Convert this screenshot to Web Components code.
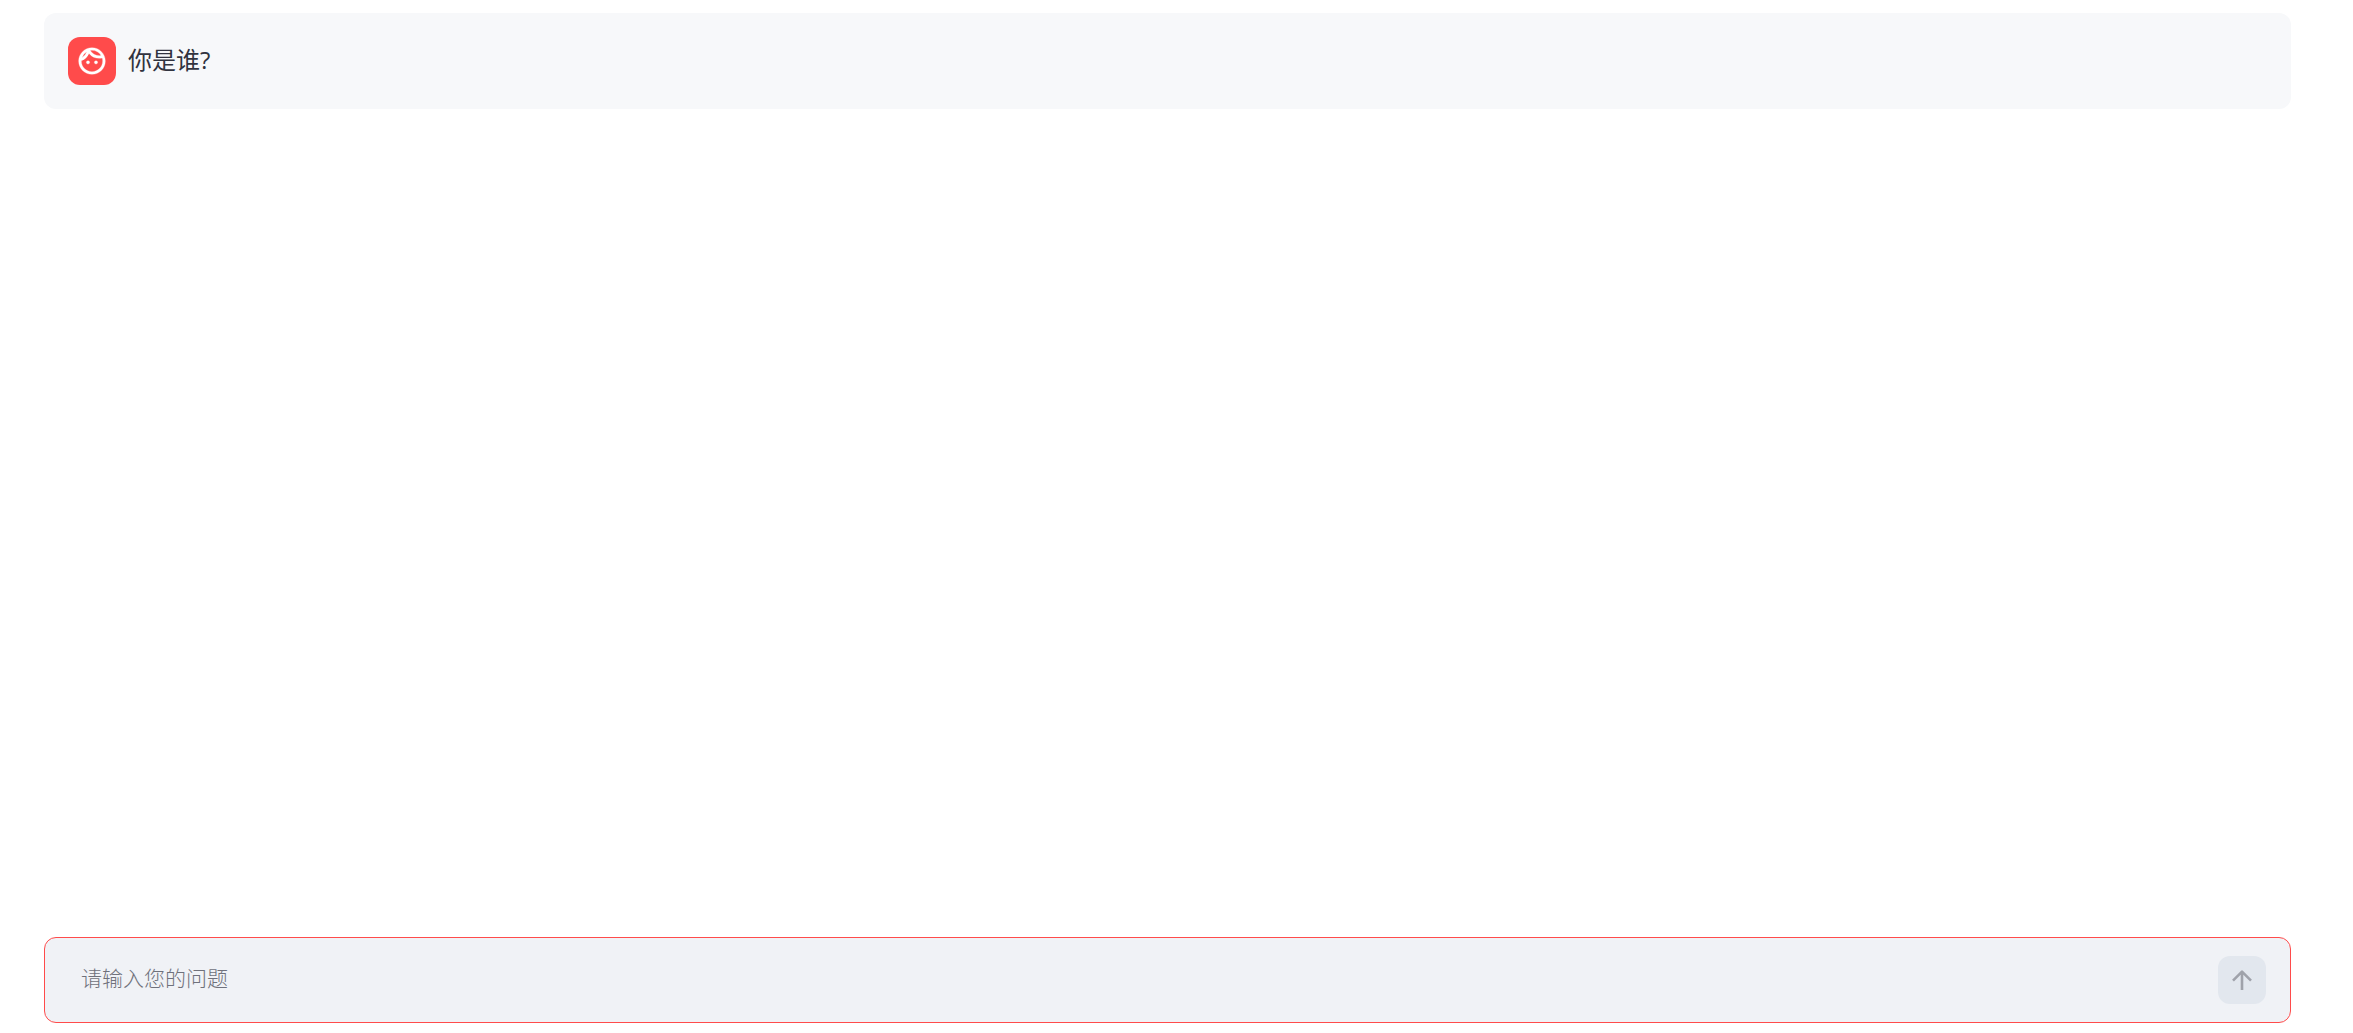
<!DOCTYPE html>
<html lang="zh-CN">
<head>
<meta charset="utf-8">
<title>Chat</title>
<style>
  html, body { height: 100%; margin: 0; background: #fff; }
  body { font-family: "Open Sans", "Noto Sans CJK SC", sans-serif; color: #31333f; }
</style>
</head>
<body>
<chat-page>
  <chat-message>你是谁?</chat-message>
  <chat-input slot="footer" placeholder="请输入您的问题"></chat-input>
</chat-page>

<script>
class ChatPage extends HTMLElement {
  constructor() {
    super();
    this.attachShadow({ mode: "open" }).innerHTML = `
      <style>
        :host { display: flex; flex-direction: column; box-sizing: border-box; height: 100vh; padding: 13px 62px 10px 44px; }
        main { flex: 1; display: flex; flex-direction: column; gap: 24px; overflow: auto; }
      </style>
      <main><slot></slot></main>
      <slot name="footer"></slot>`;
  }
}

class ChatMessage extends HTMLElement {
  constructor() {
    super();
    this.attachShadow({ mode: "open" }).innerHTML = `
      <style>
        :host { display: flex; gap: 12px; align-items: center; padding: 24px; border-radius: 12px; background: #f7f8fa; }
        .avatar { display: flex; flex: none; align-items: center; justify-content: center; width: 48px; height: 48px; border-radius: 12px; background: #ff4b4b; color: #fff; }
        svg { width: 32px; height: 32px; fill: currentColor; stroke: currentColor; stroke-width: .2; }
        p { margin: 0; padding-bottom: 2px; font-size: 24px; line-height: 36px; }
      </style>
      <div class="avatar">
        <svg viewBox="0 0 24 24" aria-hidden="true"><path d="M10.25 13c0 .69-.56 1.25-1.25 1.25S7.75 13.69 7.75 13 8.31 11.75 9 11.75s1.25.56 1.25 1.25zM15 11.75c-.69 0-1.25.56-1.25 1.25s.56 1.25 1.25 1.25 1.25-.56 1.25-1.25-.56-1.25-1.25-1.25zm7 .25c0 5.52-4.48 10-10 10S2 17.52 2 12 6.48 2 12 2s10 4.48 10 10zM10.66 4.12C12.06 6.44 14.6 8 17.5 8c.46 0 .91-.05 1.34-.12C17.44 5.56 14.9 4 12 4c-.46 0-.91.05-1.34.12zM4.42 9.47a8.046 8.046 0 0 0 3.66-4.44A8.046 8.046 0 0 0 4.42 9.47zM20 12c0-.78-.12-1.53-.33-2.24-.7.15-1.42.24-2.17.24a10 10 0 0 1-7.76-3.69A10.016 10.016 0 0 1 4 11.86c.01.04 0 .09 0 .14 0 4.41 3.59 8 8 8s8-3.59 8-8z"/></svg>
      </div>
      <p><slot></slot></p>`;
  }
}

class ChatInput extends HTMLElement {
  constructor() {
    super();
    this.attachShadow({ mode: "open" }).innerHTML = `
      <style>
        :host { display: block; }
        form { display: flex; align-items: center; gap: 12px; margin: 0; padding: 18px 24px 18px 36px; border: 1px solid #ff4b4b; border-radius: 12px; background: #f0f2f6; }
        input { flex: 1; min-width: 0; height: 48px; box-sizing: border-box; margin: 0; padding: 0 0 4px; border: 0; outline: 0; background: none; color: inherit; font: inherit; font-size: 21px; }
        input::placeholder { color: #6f717b; opacity: 1; font-weight: 300; }
        button { display: flex; flex: none; align-items: center; justify-content: center; width: 48px; height: 48px; padding: 0; border: 0; border-radius: 12px; background: #e2e7ee; color: #9fa2aa; }
        svg { width: 24px; height: 24px; fill: none; stroke: currentColor; stroke-width: 2.6; stroke-linejoin: round; }
      </style>
      <form>
        <input type="text" aria-label="请输入您的问题">
        <button type="button" aria-label="发送"><svg viewBox="0 0 24 24" aria-hidden="true"><path d="M12 22V4M3 12.600L12 3.600l9 9"/></svg></button>
      </form>`;
  }
  connectedCallback() {
    this.shadowRoot.querySelector("input").placeholder = this.getAttribute("placeholder") || "";
  }
}

customElements.define("chat-page", ChatPage);
customElements.define("chat-message", ChatMessage);
customElements.define("chat-input", ChatInput);
</script>
</body>
</html>
